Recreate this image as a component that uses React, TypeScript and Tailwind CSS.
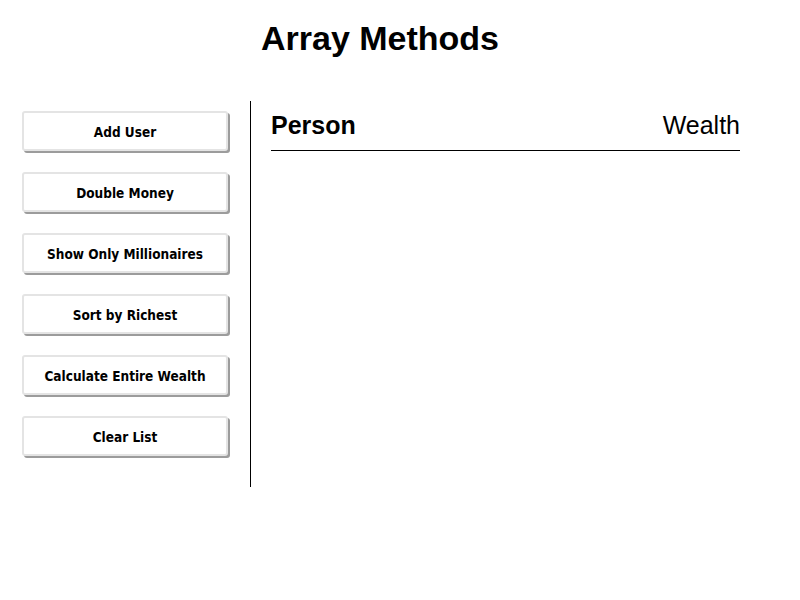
import React from 'react';

const actions = [
  'Add User',
  'Double Money',
  'Show Only Millionaires',
  'Sort by Richest',
  'Calculate Entire Wealth',
  'Clear List',
];

const App: React.FC = () => {
  return (
    <div className="w-[760px] min-h-[600px] bg-white text-black font-['Liberation_Sans',Arial,sans-serif]">
      <h1 className="pt-[18px] text-center text-[34px] font-bold leading-[40px]">Array Methods</h1>

      <div className="mt-[43px] flex">
        <aside className="w-[251px] border-r border-black pl-[22px] pr-[21px] pt-[10px] pb-[31px] flex flex-col gap-[21px]">
          {actions.map((label) => (
            <button
              key={label}
              className="h-[40px] w-[206px] rounded-[3px] border-2 border-[#e4e4e4] bg-white pt-[2px] text-[13.5px] font-bold text-black shadow-[2px_2px_0_#9c9c9c] font-['DejaVu_Sans_Condensed','DejaVu_Sans',Tahoma,sans-serif]"
            >
              {label}
            </button>
          ))}
        </aside>

        <main className="flex-1 px-[20px] pt-[8px]">
          <div className="flex items-end justify-between border-b border-black pb-[9px] pr-[-1px] text-[25px] leading-[32px]">
            <strong className="font-bold">Person</strong>
            <span>Wealth</span>
          </div>
        </main>
      </div>
    </div>
  );
};

export default App;
